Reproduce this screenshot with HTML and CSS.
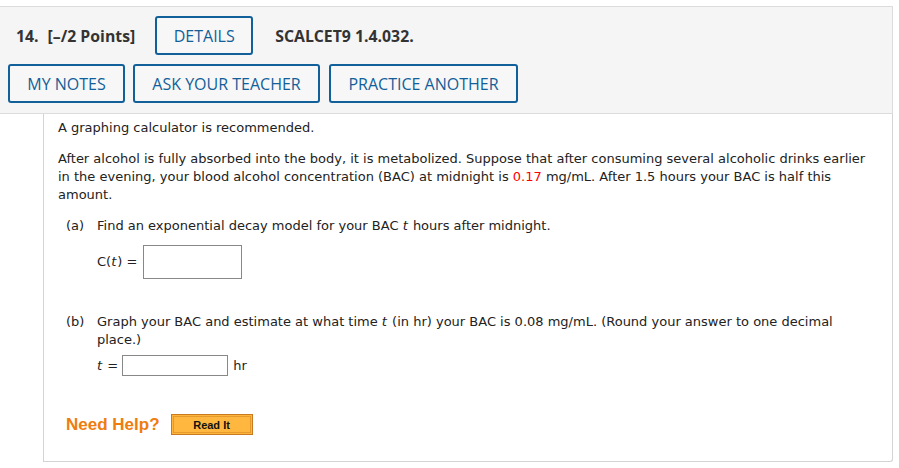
FILE: index.html
```html
<!DOCTYPE html>
<html>
<head>
<meta charset="utf-8">
<link rel="stylesheet" href="styles.css">
</head>
<body>
<div class="question">
  <div class="qhead">
    <div class="row row1">
      <span class="qnum">14.</span>
      <span class="points">[–/2 Points]</span>
      <button class="btn">DETAILS</button>
      <span class="code">SCALCET9 1.4.032.</span>
    </div>
    <div class="row row2">
      <button class="btn btn-notes">MY NOTES</button>
      <button class="btn btn-ask">ASK YOUR TEACHER</button>
      <button class="btn btn-practice">PRACTICE ANOTHER</button>
    </div>
  </div>
  <div class="qbody">
    <p class="intro">A graphing calculator is recommended.</p>
    <p class="para">After alcohol is fully absorbed into the body, it is metabolized. Suppose that after consuming several alcoholic drinks earlier in the evening, your blood alcohol concentration (BAC) at midnight is <span class="red">0.17</span> mg/mL. After 1.5 hours your BAC is half this amount.</p>
    <div class="part part-a">
      <span class="plabel">(a)</span>
      <div class="pbody">
        <div class="ptext">Find an exponential decay model for your BAC <i class="var">t</i> hours after midnight.</div>
        <div class="answer answer-a">
          <span class="math">C(<i class="var">t</i>) =</span>
          <span class="box box-a"></span>
        </div>
      </div>
    </div>
    <div class="part part-b">
      <span class="plabel">(b)</span>
      <div class="pbody">
        <div class="ptext">Graph your BAC and estimate at what time <i class="var">t</i> (in hr) your BAC is 0.08 mg/mL. (Round your answer to one decimal place.)</div>
        <div class="answer answer-b">
          <span class="math"><i class="var">t</i> =</span>
          <span class="box box-b"></span>
          <span class="unit">hr</span>
        </div>
      </div>
    </div>
    <div class="help">
      <span class="needhelp">Need Help?</span>
      <span class="readit"><span class="readit-in">Read It</span></span>
    </div>
  </div>
</div>
</body>
</html>
```
FILE: styles.css
```css
html, body {
  margin: 0;
  padding: 0;
  background: #fff;
}
.question {
  margin-top: 6px;
  width: 893px;
}
.qhead {
  background: #f5f5f5;
  border: 1px solid #dcdcdc;
  border-left: none;
  height: 106px;
  box-sizing: content-box;
  padding: 0;
  font-family: "Open Sans", "Liberation Sans", sans-serif;
}
.row {
  display: flex;
  align-items: center;
}
.row1 {
  margin-top: 9px;
  height: 39px;
}
.row2 {
  margin-top: 9px;
  height: 39px;
  padding-left: 8px;
}
.qnum {
  margin-left: 16px;
  font-weight: 700;
  font-size: 15.8px;
  color: #333;
}
.points {
  margin-left: 9px;
  font-weight: 700;
  font-size: 15.8px;
  color: #333;
}
.btn {
  box-sizing: border-box;
  height: 39px;
  border: 2px solid #11609a;
  border-radius: 3px;
  background: #f7f7f7;
  color: #11609a;
  font-family: "Open Sans", "Liberation Sans", sans-serif;
  font-size: 16px;
  font-weight: 500;
  padding: 0;
  margin: 0;
  display: flex;
  align-items: center;
  justify-content: center;
}
.row1 .btn {
  margin-left: 20px;
  width: 98px;
}
.code {
  margin-left: 22px;
  font-weight: 700;
  font-size: 15.8px;
  color: #333;
}
.btn-notes { width: 117px; }
.btn-ask { width: 187px; margin-left: 8px; }
.btn-practice { width: 189px; margin-left: 9px; }

.qbody {
  margin-left: 43px;
  border: 1px solid #d4d4d4;
  border-top: none;
  border-radius: 0 0 3px 0;
  height: 348px;
  padding: 5px 0 0 14px;
  box-sizing: border-box;
  font-family: "DejaVu Sans", Verdana, sans-serif;
  font-size: 13px;
  line-height: 18px;
  color: #222;
}
.qbody p {
  margin: 0;
}
.para {
  margin-top: 13px !important;
  padding-right: 20px;
}
.red { color: #f00; }
.var {
  padding-right: 1px;
}
.part {
  display: flex;
  margin-left: 8px;
}
.part-a { margin-top: 13px; }
.part-b { margin-top: 34px; }
.plabel {
  width: 31px;
  flex: none;
}
.pbody {
  flex: 1;
  padding-right: 20px;
}
.answer {
  display: flex;
  align-items: center;
}
.answer-a { margin-top: 10px; }
.answer-b { margin-top: 6px; }
.math {
  color: #222;
}
.box {
  display: inline-block;
  box-sizing: border-box;
  border: 1px solid #888;
  background: #fff;
}
.box-a {
  width: 99px;
  height: 34px;
  margin-left: 6px;
}
.box-b {
  width: 106px;
  height: 21px;
  margin-left: 4px;
}
.unit {
  margin-left: 5px;
}
.help {
  display: flex;
  align-items: center;
  margin-left: 8px;
  margin-top: 38px;
}
.needhelp {
  font-family: "Liberation Sans", Arial, sans-serif;
  font-weight: 700;
  font-size: 17px;
  color: #ee7d0e;
}
.readit {
  margin-left: 11px;
  box-sizing: border-box;
  width: 82px;
  height: 21px;
  border: 1px solid #c97a1f;
  background: #ffb53d;
  padding: 1px;
  display: flex;
}
.readit-in {
  flex: 1;
  border: 1px solid #e59a2e;
  background: #ffb73f;
  font-family: "Liberation Sans", Arial, sans-serif;
  font-weight: 700;
  font-size: 11px;
  color: #111;
  display: flex;
  align-items: center;
  justify-content: center;
}
```
